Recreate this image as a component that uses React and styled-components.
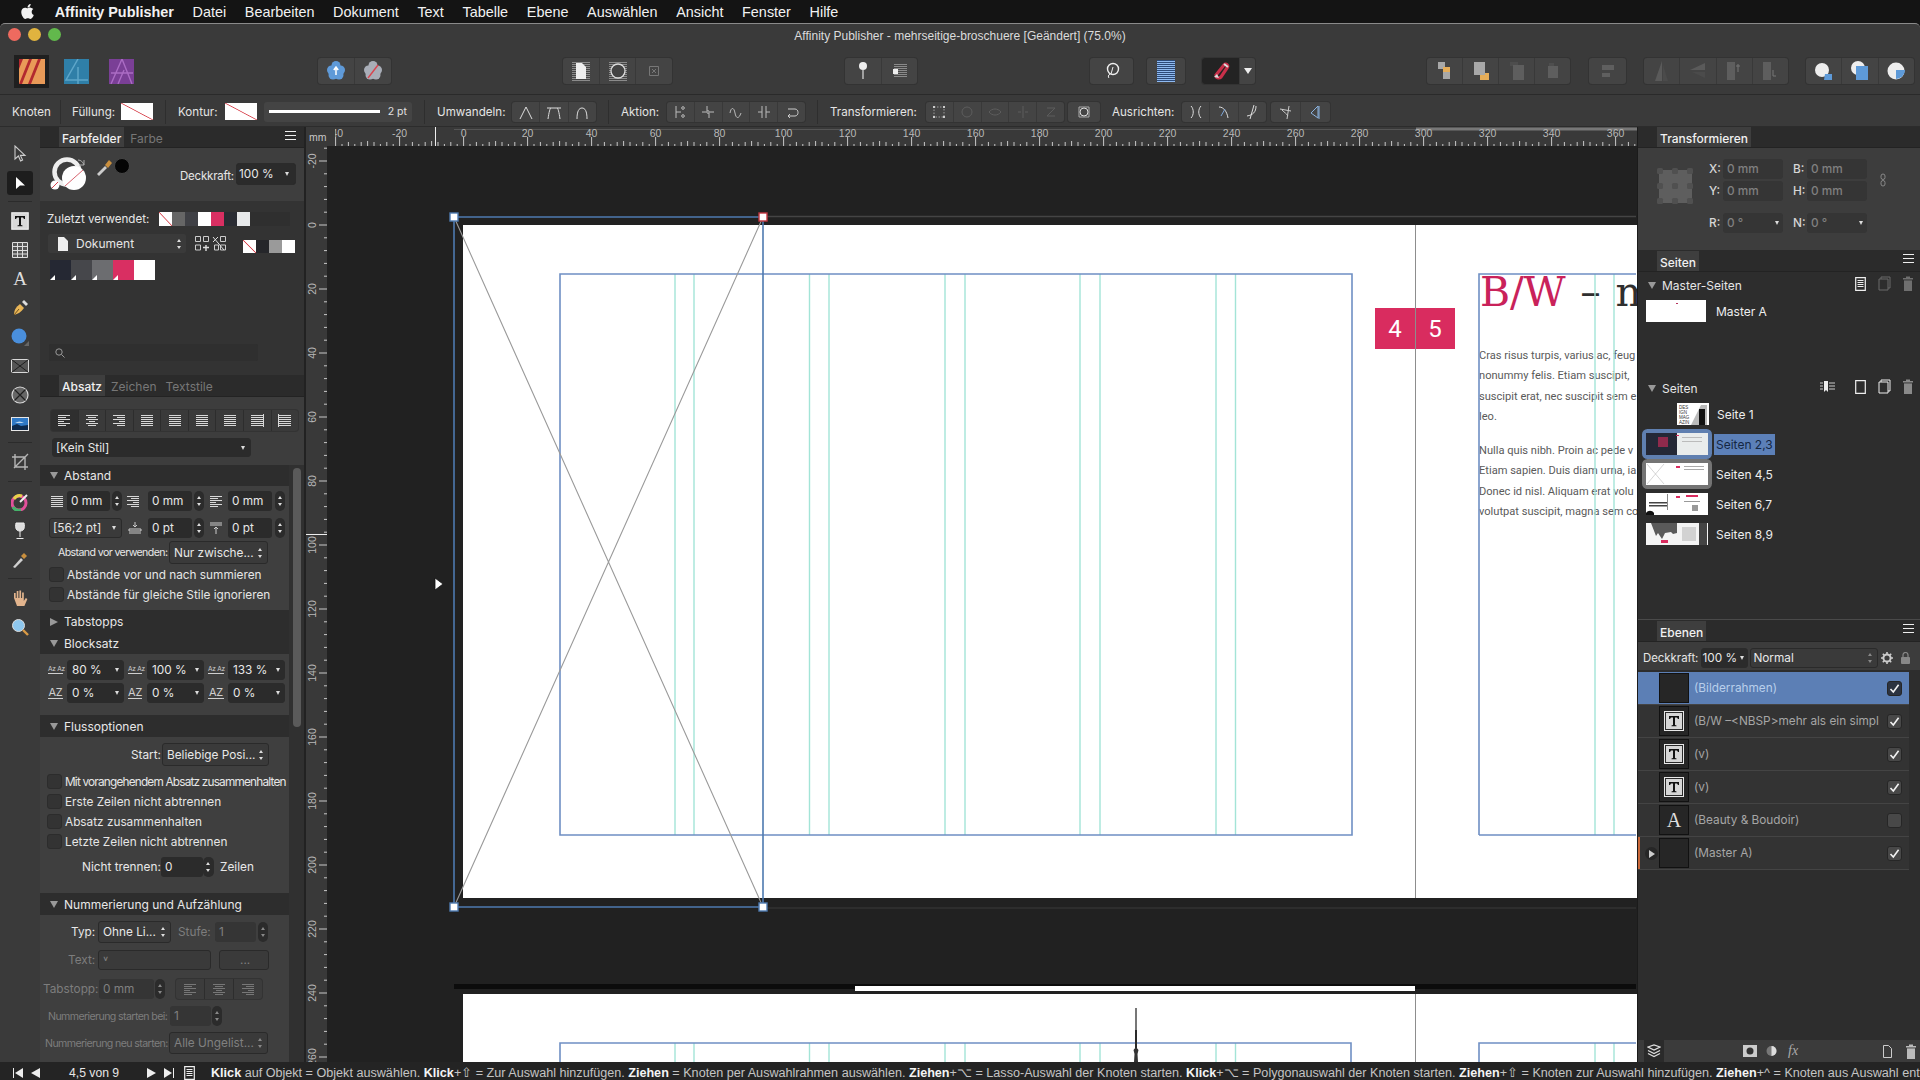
import React from "react";
import styled, { createGlobalStyle, css } from "styled-components";
import { FaApple } from "react-icons/fa";

const GlobalStyle = createGlobalStyle`
  html, body { margin: 0; padding: 0; background: #121212; overflow: hidden; }
  body { font-family: "Inter", "Liberation Sans", sans-serif; color: #e6e6e6; }
  * { box-sizing: border-box; }
`;

const offset = css`
  ${({ $ml }) => $ml !== undefined && `margin-left: ${$ml}px;`}
  ${({ $mt }) => $mt !== undefined && `margin-top: ${$mt}px;`}
`;

const Screen = styled.div`
  width: 1920px;
  height: 1080px;
  display: flex;
  flex-direction: column;
  overflow: hidden;
`;

const MenuBar = styled.div`
  height: 23px;
  background: #141414;
  display: flex;
  align-items: center;
  gap: 18.7px;
  padding-left: 19px;
  font: 14.4px "Liberation Sans", sans-serif;
  color: #f2f2f2;
  b { margin-left: 1px; }
  svg { margin-right: -1px; }
`;

const Window = styled.div`
  flex: 1;
  display: flex;
  flex-direction: column;
  min-height: 0;
  background: #3a3a3a;
  border-top: 1px solid #8a8a8a;
  border-radius: 5px 5px 0 0;
  overflow: hidden;
`;

const TitleBar = styled.div`
  height: 24px;
  position: relative;
  display: flex;
  align-items: center;
  justify-content: center;
  padding-bottom: 1px;
  font: 12px "Liberation Sans", sans-serif;
  color: #dcdcdc;
`;

const Lights = styled.div`
  position: absolute;
  left: 8px;
  top: 4px;
  display: flex;
  gap: 7px;
`;

const Light = styled.i`
  width: 13px;
  height: 13px;
  border-radius: 50%;
  background: ${({ $c }) => $c};
`;

const Toolbar = styled.div`
  height: 47px;
  display: flex;
  align-items: center;
  padding-left: 14px;
  border-bottom: 1px solid #2a2a2a;
`;

const ContextBar = styled.div`
  height: 32px;
  display: flex;
  align-items: center;
  padding: 2px 0 0 12px;
  border-bottom: 1px solid #2c2c2c;
  font-size: 12px;
  white-space: nowrap;
`;

const CtxLabel = styled.span`
  ${offset}
  width: ${({ $w }) => $w}px;
  flex: none;
  color: #e4e4e4;
  font-size: 11.6px;
`;

const VSep = styled.i`
  ${offset}
  width: 1px;
  height: 24px;
  background: #2e2e2e;
  flex: none;
`;

const AppTile = styled.div`
  ${offset}
  width: ${({ $w }) => $w || 25}px;
  height: ${({ $dark }) => ($dark ? 33 : 26)}px;
  display: flex;
  align-items: center;
  justify-content: center;
  background: ${({ $dark }) => ($dark ? "#1f1f1f" : "transparent")};
  flex: none;
`;

const BtnGroup = styled.div`
  ${offset}
  display: flex;
  flex: none;
  height: ${({ $h }) => $h || 26}px;
  width: ${({ $w }) => $w}px;
  border-radius: 3px;
  overflow: hidden;
  background: ${({ $bg }) => $bg || "#444444"};
  box-shadow: 0 0 0 1px #333333;
`;

const TBtn = styled.div`
  flex: ${({ $fixed }) => ($fixed ? `0 0 ${$fixed}px` : "1")};
  min-width: 0;
  display: flex;
  align-items: center;
  justify-content: center;
  background: ${({ $bg }) => $bg || "transparent"};
  & + & { border-left: 1px solid #393939; }
`;

const ColorChip = styled.div`
  ${offset}
  width: ${({ $w }) => $w}px;
  height: ${({ $h }) => $h}px;
  flex: none;
  background: ${({ $c }) =>
    $c === "none"
      ? "linear-gradient(to top right, #fff calc(50% - 0.8px), #d8454f 50%, #fff calc(50% + 0.8px))"
      : $c};
`;

const StrokeBox = styled.div`
  ${offset}
  width: 148px;
  height: 20px;
  flex: none;
  display: flex;
  align-items: center;
  padding: 0 5px;
  background: #444444;
  border-radius: 3px;
  font-size: 10.5px;
  color: #e0e0e0;
  justify-content: space-between;
  i { width: 111px; height: 3px; background: #fff; display: block; }
`;

const Main = styled.div`
  flex: 1;
  min-height: 0;
  display: flex;
`;

const ToolColumn = styled.div`
  width: 40px;
  flex: none;
  display: flex;
  flex-direction: column;
  align-items: center;
  padding-top: 12px;
  background: #3a3a3a;
`;

const ToolBtn = styled.div`
  width: 26px;
  height: ${({ $h }) => $h || 29}px;
  flex: none;
  display: flex;
  align-items: center;
  justify-content: center;
  border-radius: 3px;
  ${({ $on }) => $on && "background: #1d1d1d; height: 24px; margin: 3px 0 2px;"}
`;

const ToolSep = styled.i`
  width: 24px;
  height: 1px;
  background: #2b2b2b;
  margin: ${({ $m }) => $m || 4}px 0;
  flex: none;
`;

const ToolLetter = styled.span`
  font: 19px "Liberation Serif", serif;
  color: #ddd;
`;

const LeftColumn = styled.div`
  width: 266px;
  flex: none;
  display: flex;
  flex-direction: column;
  background: #2e2e2e;
  border-right: 2px solid #222;
  font-size: 11.8px;
`;

const PanelHead = styled.div`
  height: ${({ $h }) => $h || 21}px;
  flex: none;
  display: flex;
  align-items: flex-end;
  position: relative;
  padding-left: ${({ $pl }) => $pl || 19}px;
  gap: 3px;
  background: #2b2b2b;
  border-bottom: 1px solid #232323;
  ${({ $line }) => $line && "border-top: 1px solid #4a4a4a;"}
  font-size: 12px;
`;

const Tab = styled.div`
  height: ${({ $h }) => $h || 20}px;
  padding: 2px 3px 0;
  display: flex;
  align-items: center;
  color: ${({ $on }) => ($on ? "#f1f1f1" : "#777")};
  background: ${({ $on }) => ($on ? "#3e3e3e" : "transparent")};
  ${({ $on }) => $on && "font-weight: 500;"}
`;

const MenuGlyph = styled.div`
  position: absolute;
  right: ${({ $r }) => $r}px;
  top: 4px;
  width: 11px;
  height: 9px;
  border-top: 1px solid #eee;
  border-bottom: 1px solid #eee;
  &::before {
    content: "";
    display: block;
    margin-top: 3px;
    height: 1px;
    background: #eee;
  }
`;

const ColorTop = styled.div`
  height: 53px;
  flex: none;
  display: flex;
  background: #3e3e3e;
  position: relative;
  padding: 9px 0 0 10px;
`;

const OpacityText = styled.span`
  position: absolute;
  left: 140px;
  top: 21px;
  font-size: 11.5px;
  letter-spacing: -0.2px;
`;

const SwatchArea = styled.div`
  height: 174px;
  flex: none;
  background: #333333;
  padding-top: 11px;
`;

const Row = styled.div`
  ${offset}
  display: flex;
  align-items: center;
  height: ${({ $h }) => $h || 20}px;
  padding-left: ${({ $pl }) => $pl || 0}px;
  white-space: nowrap;
  flex: none;
`;

const RecentLabel = styled.span`
  width: 112px;
  flex: none;
  font-size: 11.6px;
`;

const RecentStrip = styled.div`
  ${offset}
  width: ${({ $w }) => $w || 131}px;
  height: ${({ $h }) => $h || 14}px;
  flex: none;
  display: flex;
  background: #2f2f2f;
`;

const DocSelect = styled.div`
  ${offset}
  width: 138px;
  height: 19px;
  flex: none;
  display: flex;
  align-items: center;
  padding-left: 10px;
  gap: 8px;
  background: #3a3a3a;
  border-radius: 2px;
  font-size: 12px;
  position: relative;
`;

const Palette = styled.div`
  display: flex;
  margin: 7px 0 0 10px;
`;

const PaletteChip = styled.div`
  width: 21px;
  height: 20px;
  position: relative;
  background: ${({ $c }) => $c};
  ${({ $corner }) =>
    $corner &&
    `&::after {
      content: "";
      position: absolute;
      left: 0;
      bottom: 0;
      border-style: solid;
      border-width: 0 0 5px 5px;
      border-color: transparent transparent #fff transparent;
    }`}
`;

const SearchBox = styled.div`
  width: 209px;
  height: 17px;
  margin: 64px 0 0 9px;
  padding-left: 6px;
  display: flex;
  align-items: center;
  background: #2f2f2f;
  border-radius: 2px;
`;

const AbsatzTop = styled.div`
  height: 68px;
  flex: none;
  background: #3d3d3d;
  padding: 13px 0 0 11px;
`;

const AlignBtn = styled.div`
  flex: 1;
  display: flex;
  align-items: center;
  justify-content: center;
  background: ${({ $on }) => ($on ? "#2f2f2f" : "transparent")};
  & + & { border-left: 1px solid #2d2d2d; }
`;

const Scroller = styled.div`
  flex: 1;
  min-height: 0;
  display: flex;
  background: #303030;
`;

const ScrollBody = styled.div`
  width: 249px;
  flex: none;
  display: flex;
  flex-direction: column;
`;

const ScrollRail = styled.div`
  flex: 1;
  padding: 3px 3px 0 4px;
  &::before {
    content: "";
    display: block;
    height: 259px;
    width: 8px;
    background: #5a5a5a;
    border-radius: 4px;
  }
`;

const SectionHead = styled.div`
  height: ${({ $h }) => $h || 21}px;
  flex: none;
  display: flex;
  align-items: center;
  gap: 6px;
  padding-left: 10px;
  background: #2d2d2d;
  font-size: 12px;
  color: #e8e8e8;
`;

const Tri = styled.i`
  width: 0;
  height: 0;
  flex: none;
  border-style: solid;
  ${({ $open }) =>
    $open
      ? "border-width: 7px 4px 0 4px; border-color: #999 transparent transparent transparent;"
      : "border-width: 4px 0 4px 8px; border-color: transparent transparent transparent #999;"}
`;

const SectionBody = styled.div`
  height: ${({ $h }) => $h}px;
  flex: none;
  background: #3f3f3f;
  padding-top: ${({ $pt }) => $pt || 0}px;
  ${({ $fill }) => $fill && "flex: 1; height: auto;"}
`;

const control = css`
  ${offset}
  width: ${({ $w }) => $w}px;
  height: ${({ $h }) => $h || 20}px;
  flex: none;
  display: flex;
  align-items: center;
  padding-left: ${({ $pl }) => ($pl === undefined ? 4 : $pl)}px;
  border-radius: 3px;
  position: relative;
  font-size: 11.8px;
  white-space: nowrap;
  color: ${({ $dim }) => ($dim ? "#808080" : "#e8e8e8")};
`;

const Field = styled.div`
  ${control}
  background: ${({ $dim }) => ($dim ? "#353535" : "#2b2b2b")};
`;

const SelectBox = styled.div`
  ${control}
  background: ${({ $dark }) => ($dark ? "#2b2b2b" : "#3a3a3a")};
  border: 1px solid ${({ $dark }) => ($dark ? "#2b2b2b" : "#2a2a2a")};
`;

const Caret = styled.i`
  position: absolute;
  right: ${({ $r }) => $r || 4}px;
  top: 50%;
  margin-top: -2px;
  border-style: solid;
  border-width: 4px 2.5px 0 2.5px;
  border-color: #ddd transparent transparent transparent;
`;

const Updown = styled.i`
  position: absolute;
  right: 4px;
  top: 50%;
  margin-top: -5px;
  height: 10px;
  width: 5px;
  &::before, &::after {
    content: "";
    position: absolute;
    left: 0;
    border-style: solid;
    border-color: transparent;
  }
  &::before { top: 0; border-width: 0 2.5px 3px 2.5px; border-bottom-color: ${({ $dim }) => ($dim ? "#888" : "#ddd")}; }
  &::after { bottom: 0; border-width: 3px 2.5px 0 2.5px; border-top-color: ${({ $dim }) => ($dim ? "#888" : "#ddd")}; }
`;

const StepperBox = styled.div`
  ${offset}
  width: ${({ $w }) => $w || 10}px;
  height: 20px;
  flex: none;
  position: relative;
  border-radius: 5px;
  background: #2b2b2b;
  ${Updown} { right: auto; left: 2.5px; }
`;

const Stepper = ({ $ml, $dim, $w }) => (
  <StepperBox $ml={$ml} $w={$w}>
    <Updown $dim={$dim} />
  </StepperBox>
);

const CheckBox = styled.i`
  ${offset}
  width: 15px;
  height: 15px;
  flex: none;
  display: flex;
  align-items: center;
  justify-content: center;
  border-radius: 3px;
  background: #333;
  border: 1px solid #2c2c2c;
`;

const CheckLabel = styled.span`
  margin-left: 3px;
  letter-spacing: ${({ $tight }) => ($tight ? "-0.8px" : "0")};
  font-size: 11.8px;
`;

const SmallLabel = styled.span`
  ${offset}
  width: ${({ $w }) => $w}px;
  flex: none;
  text-align: ${({ $left }) => ($left ? "left" : "right")};
  font-size: ${({ $fs }) => $fs || 11.8}px;
  letter-spacing: ${({ $ls }) => $ls || 0}px;
  color: ${({ $dim }) => ($dim ? "#7d7d7d" : "#e8e8e8")};
`;

const IconSlot = styled.div`
  ${offset}
  width: ${({ $w }) => $w}px;
  flex: none;
  display: flex;
  justify-content: center;
`;

const AzGlyph = styled.span`
  ${offset}
  width: ${({ $w }) => $w}px;
  flex: none;
  text-align: center;
  font-size: ${({ $big }) => ($big ? 11 : 6.5)}px;
  letter-spacing: -0.2px;
  line-height: 1;
  color: #cfcfcf;
  border-bottom: 1px solid #cfcfcf;
  white-space: nowrap;
`;

const Workspace = styled.div`
  flex: 1;
  min-width: 0;
  display: flex;
  flex-direction: column;
`;

const HRulerWrap = styled.div`
  height: 19px;
  flex: none;
  background: #393939;
`;

const CanvasRow = styled.div`
  flex: 1;
  min-height: 0;
  display: flex;
`;

const VRulerWrap = styled.div`
  width: 21px;
  flex: none;
  background: #393939;
`;

const Canvas = styled.div`
  flex: 1;
  position: relative;
  overflow: hidden;
  background: #212121;
`;

const PageSheet = styled.div`
  position: absolute;
  left: 136px;
  top: ${({ $top }) => $top}px;
  width: 1240px;
  height: 673px;
  background: #fff;
`;

const Badge = styled.div`
  position: absolute;
  left: 912px;
  top: 83px;
  width: 80px;
  height: 41px;
  background: #d92c5f;
  display: flex;
  font: 24px Roboto, sans-serif;
  color: #fff;
  span { flex: 1; display: flex; align-items: center; justify-content: center; }
`;

const Headline = styled.div`
  position: absolute;
  left: 1017px;
  top: 41px;
  white-space: nowrap;
  font: 41px/52px "DejaVu Serif", serif;
  color: #2f2f2f;
  letter-spacing: -0.2px;
  word-spacing: 2px;
  b { font-weight: 400; color: #c9225a; }
`;

const BodyCopy = styled.div`
  position: absolute;
  left: 1016px;
  top: ${({ $top }) => $top}px;
  white-space: nowrap;
  font: 11.1px/20.4px Roboto, sans-serif;
  color: #5a5a5a;
`;

const CanvasArt = styled.svg`
  position: absolute;
  left: 0;
  top: 0;
  pointer-events: none;
`;

const RightColumn = styled.div`
  width: 283px;
  flex: none;
  display: flex;
  flex-direction: column;
  background: #2d2d2d;
  font-size: 12px;
  border-left: 1px solid #1b1b1b;
`;

const TransformBody = styled.div`
  height: 102px;
  flex: none;
  display: flex;
  background: #3d3d3d;
  padding: 11px 0 0 18px;
`;

const AnchorBox = styled.div`
  margin-top: 8px;
  flex: none;
  line-height: 0;
`;

const TransformGrid = styled.div`
  margin-left: 14px;
  display: grid;
  grid-template-columns: 14px 60px 10px 14px 60px;
  grid-template-rows: 20px 20px 8px 20px;
  gap: 2px 0;
  align-items: center;
  font-size: 11.8px;
  font-weight: 500;
  color: #d6d6d6;
`;

const GridSpacer = styled.i`
  grid-column: 1 / -1;
`;

const PagesBody = styled.div`
  height: 347px;
  flex: none;
  padding-top: 3px;
  display: flex;
  flex-direction: column;
`;

const PagesHead = styled.div`
  ${offset}
  height: 20px;
  flex: none;
  display: flex;
  align-items: center;
  gap: 6px;
  padding-left: 10px;
  position: relative;
  font-size: 12px;
`;

const HeadIcons = styled.div`
  position: absolute;
  left: 183px;
  top: 1px;
  display: flex;
  align-items: center;
  width: 92px;
  justify-content: flex-end;
  gap: 12px;
`;

const BookmarkSlot = styled.span`
  margin-right: 8px;
`;

const PageRow = styled.div`
  ${offset}
  height: 22px;
  flex: none;
  display: flex;
  align-items: center;
  padding-left: ${({ $pl }) => $pl || 8}px;
  font-size: 12px;
`;

const ThumbFrame = styled.div`
  flex: none;
  border-radius: 2px;
  line-height: 0;
  box-shadow: ${({ $ring }) => ($ring ? `0 0 0 4px ${$ring}` : "none")};
`;

const PageName = styled.span`
  margin-left: ${({ $hl, $ml }) => $ml || ($hl ? 6 : 8)}px;
  padding: ${({ $hl }) => ($hl ? "3px 2px" : "0")};
  background: ${({ $hl }) => ($hl ? "#5c80b8" : "transparent")};
  color: ${({ $hl }) => ($hl ? "#142743" : "#eeeeee")};
`;

const LayerOptions = styled.div`
  height: 28px;
  flex: none;
  display: flex;
  align-items: center;
  padding: 3px 0 0 5px;
  background: #3c3c3c;
  font-size: 11.4px;
`;

const LayerList = styled.div`
  flex: none;
  padding-top: 2px;
`;

const LayerRow = styled.div`
  width: 271px;
  height: 33px;
  display: flex;
  align-items: center;
  position: relative;
  padding-left: 21px;
  background: ${({ $on }) => ($on ? "#5c7fb5" : "#333333")};
  border-bottom: 1px solid #444;
  ${({ $flag }) => $flag && "box-shadow: inset 2px 0 0 #c9683a;"}
`;

const LayerThumb = styled.div`
  width: 30px;
  height: 30px;
  flex: none;
  display: flex;
  align-items: center;
  justify-content: center;
  background: #262626;
  border: 1px solid #111;
`;

const LayerLetter = styled.span`
  font: 20px "Liberation Serif", serif;
  color: #ddd;
`;

const LayerName = styled.span`
  margin-left: 5px;
  flex: 1;
  font-size: 11.8px;
  overflow: hidden;
  white-space: nowrap;
  padding-right: 26px;
  color: ${({ $on }) => ($on ? "#b9cfeb" : "#a6a6a6")};
`;

const LayerCheck = styled(CheckBox)`
  position: absolute;
  right: 7px;
  top: 9px;
  background: ${({ $on }) => ($on ? "#2c3340" : "#484848")};
  border-color: #262626;
`;

const ExpandDot = styled.div`
  position: absolute;
  left: 7px;
  top: 10px;
  width: 13px;
  height: 13px;
  border-radius: 50%;
  background: #262626;
  display: flex;
  align-items: center;
  justify-content: center;
`;

const LayerFooter = styled.div`
  margin-top: auto;
  height: 22px;
  flex: none;
  display: flex;
  align-items: center;
  padding-left: 6px;
  background: #3b3b3b;
`;

const StackBtn = styled.div`
  width: 20px;
  height: 22px;
  flex: none;
  background: #2a2a2a;
  display: flex;
  align-items: center;
  justify-content: center;
`;

const FxLabel = styled.span`
  margin-left: 11px;
  width: 16px;
  flex: none;
  font: italic 14px "Liberation Serif", serif;
  color: #aaa;
`;

const StatusBar = styled.div`
  height: 18px;
  flex: none;
  display: flex;
  align-items: center;
  padding-top: 3px;
  background: #242424;
  font: 12.62px "Liberation Sans", sans-serif;
  color: #c4c4c4;
  white-space: nowrap;
  overflow: hidden;
  b { color: #f4f4f4; }
`;

const Pager = styled.span`
  width: 52px;
  margin-left: 29px;
  flex: none;
  color: #e6e6e6;
  font-size: 12.2px;
`;

const Hint = styled.span`
  margin-left: 16px;
  flex: none;
`;

const Ic = ({ w = 16, h = 16, children }) => (
  <svg width={w} height={h} viewBox={`0 0 ${w} ${h}`} fill="none" style={{ display: "block", flex: "none" }}>
    {children}
  </svg>
);

const Lines = ({ x = 1, w = 12, y0 = 2, n = 6, step = 2, c = "#ddd" }) =>
  Array.from({ length: n }, (_, i) => <path key={i} d={`M${x} ${y0 + i * step + 0.5}h${w}`} stroke={c} />);

const TriShape = ({ d, c = "#eee" }) => <path d={d} fill={c} />;

// Small icons
const Flower = ({ body, slash }) => (
  <Ic w={20} h={22}>
    <g fill={body}>
      <circle cx="10" cy="5.5" r="4.5" />
      <circle cx="5.5" cy="10" r="4.5" />
      <circle cx="14.5" cy="10" r="4.5" />
      <circle cx="7" cy="15" r="4.5" />
      <circle cx="13" cy="15" r="4.5" />
      <circle cx="10" cy="11" r="5" />
    </g>
    {slash ? (
      <path d="M5 18 15 5" stroke="#d8454f" strokeWidth="1.4" />
    ) : (
      <path d="M10 15V8M7.8 10 10 7l2.2 3" stroke="#fff" strokeWidth="1.5" />
    )}
  </Ic>
);

const toolbarIcons = {
  page: (
    <Ic w={20} h={20}>
      <Lines x={1} w={18} y0={1} n={10} step={2} c="#8b8b8b" />
      <path d="M5 2h6l4 4v12H5z" fill="#eee" />
    </Ic>
  ),
  circleLines: (
    <Ic w={20} h={20}>
      <Lines x={1} w={18} y0={1} n={10} step={2} c="#8b8b8b" />
      <circle cx="10" cy="10" r="7" fill="#444" stroke="#ddd" strokeWidth="1.3" />
    </Ic>
  ),
  boxX: (
    <Ic w={12} h={12}>
      <path d="M1.5 1.5h9v9h-9z" stroke="#777" />
      <path d="M4 4l4 4M8 4 4 8" stroke="#777" />
    </Ic>
  ),
  pin: (
    <Ic w={12} h={20}>
      <circle cx="6" cy="5" r="4" fill="#eee" />
      <path d="M6 8v10" stroke="#ddd" strokeWidth="1.2" />
    </Ic>
  ),
  textBox: (
    <Ic w={18} h={18}>
      <Lines x={4} w={13} y0={2} n={7} step={2} c="#8a8a8a" />
      <path d="M3 7h5v5H3z" fill="#eee" />
    </Ic>
  ),
  lasso: (
    <Ic w={18} h={18}>
      <circle cx="10" cy="7" r="5.5" stroke="#eee" strokeWidth="1.4" />
      <path d="M7 12c-2 1-2 3-1 4M10 5l-2 7" stroke="#eee" />
    </Ic>
  ),
  blueLines: (
    <Ic w={20} h={24}>
      <path d="M1 1h18v22H1z" fill="#2d4a78" />
      <Lines x={1} w={18} y0={2} n={11} step={2} c="#8fbaf0" />
    </Ic>
  ),
  magnet: (
    <Ic w={20} h={22}>
      <path d="M5 15 13 5c2-2 5 0 3 3l-6 9c-1 1-5 2-5-2z" stroke="#c9304a" strokeWidth="3.2" fill="none" />
      <path d="M3 17l3-3 2 4z" fill="#ddd" />
      <path d="M13 4l4 3" stroke="#ddd" strokeWidth="2" />
    </Ic>
  ),
  orange1: (
    <Ic w={16} h={22}>
      <path d="M1 2h7v7H1z" fill="#a8a8a8" />
      <path d="M6 7h7v7H6z" fill="#e6ad58" />
      <path d="M6 12h7v7H6z" fill="#a8a8a8" />
    </Ic>
  ),
  orange2: (
    <Ic w={18} h={22}>
      <path d="M8 13h9v7H8z" fill="#e6ad58" />
      <path d="M2 2h11v13H2z" fill="#a8a8a8" />
    </Ic>
  ),
  grayStack: (
    <Ic w={16} h={20}>
      <path d="M1 1h8v4H1z" fill="#4d4d4d" />
      <path d="M4 4h11v15H4z" fill="#5e5e5e" />
    </Ic>
  ),
  grayStack2: (
    <Ic w={14} h={18}>
      <path d="M3 1h5v3H3z" fill="#4e4e4e" />
      <path d="M2 4h10v12H2z" fill="#5e5e5e" />
    </Ic>
  ),
  grayBars: (
    <Ic w={16} h={14}>
      <path d="M2 1h12v5H2z" fill="#5f5f5f" />
      <path d="M2 9h8v4H2z" fill="#5f5f5f" />
    </Ic>
  ),
  triUp: (
    <Ic w={18} h={22}>
      <path d="M9 1v20H2z" fill="#5a5a5a" />
      <path d="M10 5v16h5z" fill="#4b4b4b" />
    </Ic>
  ),
  triLeft: (
    <Ic w={20} h={20}>
      <path d="M2 9 17 2v7z" fill="#5a5a5a" />
      <path d="M4 11h13v6z" fill="#4b4b4b" />
    </Ic>
  ),
  rotA: (
    <Ic w={18} h={22}>
      <path d="M2 2h8v18H2z" fill="#5e5e5e" />
      <path d="M11 6h4M13 4v8" stroke="#777" />
    </Ic>
  ),
  rotB: (
    <Ic w={18} h={22}>
      <path d="M2 2h8v18H2z" fill="#5e5e5e" />
      <path d="M12 10v6h3" stroke="#777" />
    </Ic>
  ),
  geoA: (
    <Ic w={20} h={20}>
      <circle cx="8" cy="9" r="7" fill="#eeeeee" />
      <path d="M11 13h7v6h-8z" fill="#5e9ad8" />
    </Ic>
  ),
  geoB: (
    <Ic w={20} h={22}>
      <circle cx="8" cy="8" r="7" fill="#eeeeee" />
      <path d="M6 6h12v14H6z" fill="#5e9ad8" />
    </Ic>
  ),
  geoC: (
    <Ic w={20} h={20}>
      <circle cx="10" cy="10" r="8.5" fill="#eeeeee" />
      <path d="M10 9h9a9 9 0 0 1-9 9z" fill="#5e9ad8" />
    </Ic>
  ),
};

const curveIcons = {
  peak: <path d="M2 15 8 3l6 12" stroke="#ddd" />,
  peak2: (
    <>
      <path d="M2 15c1-7 2-11 3-11h6c1 0 2 4 3 11" stroke="#ddd" />
      <path d="M1 4h4M11 4h4" stroke="#ddd" />
    </>
  ),
  round: <path d="M3 15c0-8 2-11 5-11s5 3 5 11" stroke="#ddd" />,
  a1: (
    <>
      <path d="M4 2v12M4 8h5" stroke="#bbb" />
      <circle cx="11" cy="4" r="1.3" stroke="#bbb" />
      <circle cx="11" cy="12" r="1.3" stroke="#bbb" />
    </>
  ),
  a2: (
    <>
      <path d="M2 8h4M10 8h4M7 2v5M9 9v5" stroke="#bbb" />
      <circle cx="8" cy="8" r="1.3" stroke="#bbb" />
    </>
  ),
  a3: <path d="M2 9c1-6 4-6 5 0s4 6 6 0" stroke="#bbb" />,
  a4: <path d="M2 8h4M10 8h4M6 2v12M10 2v12" stroke="#bbb" />,
  a5: <path d="M4 5h7c4 0 4 7 0 7H5M6 10l-2 2 2 2" stroke="#ccc" />,
  t1: (
    <>
      <path d="M3 3h10v10H3z" stroke="#999" strokeDasharray="1.5 1.5" />
      <path d="M2 2h2v2H2zM12 2h2v2h-2zM2 12h2v2H2zM12 12h2v2h-2z" fill="#ccc" />
    </>
  ),
  tOff1: <circle cx="8" cy="8" r="5" stroke="#5d5d5d" />,
  tOff2: <path d="M2 8c3-4 9-4 12 0-3 4-9 4-12 0z" stroke="#5d5d5d" />,
  tOff3: <path d="M8 2v12M3 8h3M10 8h3" stroke="#5d5d5d" />,
  tOff4: <path d="M4 4h8L4 12h8" stroke="#5d5d5d" />,
  t2: (
    <>
      <path d="M3 3h10v10H3z" stroke="#aaa" />
      <circle cx="8" cy="8" r="4" stroke="#ddd" />
    </>
  ),
  s1: <path d="M3 2c3 3 3 9 0 12M13 2c-3 3-3 9 0 12" stroke="#ddd" />,
  s2: (
    <>
      <path d="M3 3c5 0 8 5 9 11" stroke="#ddd" />
      <path d="M5 12l4-7" stroke="#7ea6d8" />
    </>
  ),
  s3: <path d="M12 2c0 6-3 9-9 10M10 1 6 15" stroke="#ddd" />,
  s4: <path d="M2 5l11 2M11 2 9 15M4 6c3 3 4 3 6 6" stroke="#ccc" />,
  s5: <path d="M10 2 3 9l7 5zM11 2v13" stroke="#8bb3df" />,
};

const Cv = ({ k }) => <Ic>{curveIcons[k]}</Ic>;

const rulerMarksH = () => {
  const out = [];
  for (let mm = -48; mm <= 370; mm += 2) {
    const x = 463.6 + mm * 3.2 - 306;
    const major = mm % 20 === 0;
    const mid = mm % 10 === 0;
    const len = major ? 9 : mid ? 5 : mm % 4 === 0 ? 4 : 2;
    out.push(<path key={mm} d={`M${x.toFixed(1)} ${19 - len}V19`} stroke="#d8d8d8" strokeWidth="0.9" />);
    if (major) {
      out.push(
        <text key={`t${mm}`} x={x} y={9.5} fontSize="10.5" fill="#b8b8b8" textAnchor="middle" fontFamily="Liberation Sans">
          {mm}
        </text>,
      );
    }
  }
  return out;
};

const rulerMarksV = () => {
  const out = [];
  for (let mm = -24; mm <= 264; mm += 4) {
    const y = 225 + mm * 3.2 - 146;
    const major = mm % 20 === 0;
    out.push(<path key={mm} d={`M${major ? 13 : 18} ${y.toFixed(1)}H21`} stroke="#d8d8d8" strokeWidth="0.9" />);
    if (major) {
      out.push(
        <text
          key={`t${mm}`}
          x={0}
          y={0}
          fontSize="10.5"
          fill="#b8b8b8"
          textAnchor="middle"
          fontFamily="Liberation Sans"
          transform={`translate(10 ${y}) rotate(-90)`}
        >
          {mm}
        </text>,
      );
    }
  }
  return out;
};

const guideXs = [675, 694, 809.5, 829, 945, 965, 1080, 1100, 1216, 1235.5, 1595, 1614];

const Guides = ({ top, bottom }) => (
  <>
    <path d={`M1415.5 ${top - 49}V${bottom + 63}`} stroke="#8d8d8d" />
    {guideXs.map((x) => (
      <path key={x} d={`M${x} ${top}V${bottom}`} stroke="#a3e4d7" strokeWidth="1.4" />
    ))}
    <path d={`M1479 ${bottom}V${top}H1640M1640 ${bottom}H1479`} stroke="#6f8fc4" strokeWidth="1.6" fill="none" />
    <path d={`M560 ${top}H1352V${bottom}H560Z`} stroke="#6f8fc4" strokeWidth="1.6" fill="none" />
  </>
);

const Node = ({ x, y, red }) => (
  <rect x={x - 4} y={y - 4} width="8" height="8" fill="#fff" stroke={red ? "#c0353f" : "#4e7ab0"} strokeWidth="1.4" />
);

const Thumb = ({ kind }) => {
  if (kind === "one")
    return (
      <svg width="32" height="22" viewBox="0 0 32 22">
        <rect width="32" height="22" fill="#fff" />
        <path d="M14 22 24 2h6v20z" fill="#bbb" />
        <path d="M22 6h6v16h-6z" fill="#111" />
        <text x="2" y="6" fontSize="4.5" fill="#333" fontFamily="Liberation Sans">DES</text>
        <text x="2" y="11" fontSize="4.5" fill="#333" fontFamily="Liberation Sans">IGN</text>
        <text x="2" y="16" fontSize="4.5" fill="#333" fontFamily="Liberation Sans">MAG</text>
        <text x="2" y="21" fontSize="4.5" fill="#333" fontFamily="Liberation Sans">AZIN</text>
      </svg>
    );
  const art = {
    a: (
      <>
        <path d="M0 0h31v22H0z" fill="#242836" />
        <path d="M12 4h10v10H12z" fill="#8f2a4c" />
        <path d="M31 0h31v22H31z" fill="#e9ecec" />
        <path d="M36 4h20v1H36zM36 8h20v1H36z" fill="#bbb" />
        <path d="M30 2h3v1h-3z" fill="#d92c5f" />
      </>
    ),
    b: (
      <>
        <path d="M0 0h62v22H0z" fill="#fff" />
        <path d="M1 1 18 21M18 1 1 21" stroke="#bbb" strokeWidth="0.6" />
        <path d="M30 3h4v2h-4z" fill="#d92c5f" />
        <path d="M38 3h20v1H38zM38 6h20v1H38z" fill="#aaa" />
      </>
    ),
    c: (
      <>
        <path d="M0 0h62v22H0z" fill="#fff" />
        <path d="M3 9h18v1.5H3zM3 12h18v1.5H3z" fill="#444" />
        <path d="M21 1h1v16h-1z" fill="#888" />
        <path d="M0 20c2-3 6-3 8 0v2H0z" fill="#111" />
        <path d="M30 3h4v2h-4zM40 2h12v2H40z" fill="#d92c5f" />
        <path d="M38 8h16v1H38zM46 12h6v6h-6z" fill="#999" />
      </>
    ),
    d: (
      <>
        <path d="M0 0h62v22H0z" fill="#f4f4f4" />
        <path d="M5 0h26v10l-4 1-2-2-6 1-3 6-4-6-2 3z" fill="#5a5a5a" />
        <path d="M53 0h8v22h-8z" fill="#444" />
        <path d="M36 4h14v14H36z" fill="#d2d2d2" />
        <path d="M15 17h7v3h-7z" fill="#d92c5f" />
      </>
    ),
  }[kind];
  return (
    <svg width="62" height="22" viewBox="0 0 62 22">
      {art}
    </svg>
  );
};

const FileGlyph = ({ c = "#eee" }) => (
  <Ic w={10} h={14}>
    <path d="M0 0h6l4 4v10H0z" fill={c} />
  </Ic>
);

const PageIconLined = () => (
  <Ic w={11} h={14}>
    <path d="M.7.7h9.6v12.6H.7z" stroke="#eee" strokeWidth="1.2" />
    <Lines x={2.5} w={6} y0={3} n={4} step={2} c="#eee" />
  </Ic>
);

const PageIconDup = ({ c = "#6b6b6b" }) => (
  <Ic w={13} h={15}>
    <path d="M3 1h9v11H3z" stroke={c} />
    <path d="M1 3h9v11H1z" stroke={c} fill="#2d2d2d" />
  </Ic>
);

const Trash = ({ c = "#6f6f6f" }) => (
  <Ic w={10} h={15}>
    <path d="M0 2h10v1.6H0zM3 .5h4V2H3z" fill={c} />
    <path d="M1 4.4h8V15H1z" fill={c} />
  </Ic>
);

const Check = () => (
  <Ic w={11} h={11}>
    <path d="M1.5 6 4.3 9 9.6 1.8" stroke="#f2f2f2" strokeWidth="1.6" />
  </Ic>
);

const AlignIcon = ({ mode, c = "#d8d8d8" }) => {
  const widths = ["left", "center", "right"].includes(mode) ? [12, 8, 12, 6, 12, 8] : [12, 12, 12, 12, 12, 12];
  return (
    <Ic w={14} h={13}>
      {widths.map((w, i) => {
        const x = mode === "center" ? (14 - w) / 2 : mode === "right" ? 13 - w : 1;
        return <path key={i} d={`M${x} ${i * 2 + 1.5}h${w}`} stroke={c} />;
      })}
      {mode === "barR" && <path d="M13.5 0v13" stroke={c} />}
      {mode === "barL" && <path d="M.5 0v13" stroke={c} />}
    </Ic>
  );
};

const Az = ({ w, big, ml, label = "Az Az" }) => (
  <AzGlyph $w={w} $big={big} $ml={ml}>
    {label}
  </AzGlyph>
);

const Picker = () => (
  <Ic w={16} h={16}>
    <path d="M1 15 9 6l2 2-8 8z" fill="#d0d0d0" />
    <path d="M9 4l3-3 3 3-3 3z" fill="#c98f3e" />
  </Ic>
);

const LayerT = () => (
  <Ic w={20} h={20}>
    <rect x=".5" y=".5" width="19" height="19" fill="#2a2a2a" stroke="#e8e8e8" />
    <rect x="2" y="2" width="16" height="16" fill="#d6d6d6" />
    <path d="M5 5h10v3h-1l-1-1.4h-2V14l1.5.5v.8h-5v-.8L9 14V6.6H7L6 8H5z" fill="#111" />
  </Ic>
);

const Anchor = () => (
  <svg width="39" height="39" viewBox="0 0 39 39">
    <rect x="3" y="3" width="33" height="33" fill="#5e5e5e" />
    {[1, 16, 31].flatMap((y) =>
      [1, 16, 31].map((x) => <rect key={`${x}-${y}`} x={x} y={y} width="6" height="6" rx="1.5" fill="#505050" />),
    )}
  </svg>
);

const layers = [
  { name: "(Bilderrahmen)", on: true, check: true },
  { name: "(B/W –<NBSP>mehr als ein simpl", t: true, check: true },
  { name: "(v)", t: true, check: true },
  { name: "(v)", t: true, check: true },
  { name: "(Beauty & Boudoir)", a: true },
  { name: "(Master A)", check: true, master: true },
];

export default function App() {
  return (
    <Screen>
      <GlobalStyle />
      <MenuBar>
        <FaApple size={17} color="#f2f2f2" />
        <b>Affinity Publisher</b>
        {["Datei", "Bearbeiten", "Dokument", "Text", "Tabelle", "Ebene", "Auswählen", "Ansicht", "Fenster", "Hilfe"].map((m) => (
          <span key={m}>{m}</span>
        ))}
      </MenuBar>
      <Window>
        <TitleBar>
          <Lights>
            <Light $c="#ee6a5f" />
            <Light $c="#e0b33f" />
            <Light $c="#62b84c" />
          </Lights>
          Affinity Publisher - mehrseitige-broschuere [Geändert] (75.0%)
        </TitleBar>
        <Toolbar>
          <AppTile $dark $w={35}>
            <Ic w={26} h={25}>
              <path d="M0 0h26v25H0z" fill="#e99a58" />
              <path d="M0 0h4L0 10zM10 0h3L3 25H0zM19 0h3L12 25H9z" fill="#b2292f" />
            </Ic>
          </AppTile>
          <AppTile $ml={15}>
            <Ic w={25} h={25}>
              <path d="M0 0h25v25H0z" fill="#2f7fa8" />
              <path d="M14 0 2 21h22M14 8v17" stroke="#5ea6c9" strokeWidth="1.5" />
            </Ic>
          </AppTile>
          <AppTile $ml={20}>
            <Ic w={25} h={25}>
              <path d="M0 0h25v25H0z" fill="#7a3f96" />
              <path d="M13 0 2 25M13 0l10 25M2 14h22M9 25l6-14" stroke="#ab6cc4" strokeWidth="1.4" />
            </Ic>
          </AppTile>
          <BtnGroup $ml={184} $w={73}>
            <TBtn><Flower body="#5f9ad8" /></TBtn>
            <TBtn><Flower body="#a9aeb8" slash /></TBtn>
          </BtnGroup>
          <BtnGroup $ml={172} $w={109}>
            <TBtn>{toolbarIcons.page}</TBtn>
            <TBtn>{toolbarIcons.circleLines}</TBtn>
            <TBtn>{toolbarIcons.boxX}</TBtn>
          </BtnGroup>
          <BtnGroup $ml={173} $w={72}>
            <TBtn>{toolbarIcons.pin}</TBtn>
            <TBtn>{toolbarIcons.textBox}</TBtn>
          </BtnGroup>
          <BtnGroup $ml={173} $w={43}>
            <TBtn>{toolbarIcons.lasso}</TBtn>
          </BtnGroup>
          <BtnGroup $ml={14} $w={38}>
            <TBtn>{toolbarIcons.blueLines}</TBtn>
          </BtnGroup>
          <BtnGroup $ml={17} $w={53}>
            <TBtn $bg="#232323" $fixed={37}>{toolbarIcons.magnet}</TBtn>
            <TBtn>
              <Ic w={8} h={8}>
                <TriShape d="M0 1h8L4 7z" />
              </Ic>
            </TBtn>
          </BtnGroup>
          <BtnGroup $ml={172} $w={143}>
            <TBtn>{toolbarIcons.orange1}</TBtn>
            <TBtn>{toolbarIcons.orange2}</TBtn>
            <TBtn>{toolbarIcons.grayStack}</TBtn>
            <TBtn>{toolbarIcons.grayStack2}</TBtn>
          </BtnGroup>
          <BtnGroup $ml={19} $w={37}>
            <TBtn>{toolbarIcons.grayBars}</TBtn>
          </BtnGroup>
          <BtnGroup $ml={18} $w={144}>
            <TBtn>{toolbarIcons.triUp}</TBtn>
            <TBtn>{toolbarIcons.triLeft}</TBtn>
            <TBtn>{toolbarIcons.rotA}</TBtn>
            <TBtn>{toolbarIcons.rotB}</TBtn>
          </BtnGroup>
          <BtnGroup $ml={18} $w={108}>
            <TBtn>{toolbarIcons.geoA}</TBtn>
            <TBtn>{toolbarIcons.geoB}</TBtn>
            <TBtn>{toolbarIcons.geoC}</TBtn>
          </BtnGroup>
        </Toolbar>
        <ContextBar>
          <CtxLabel $w={40}>Knoten</CtxLabel>
          <VSep $ml={8} />
          <CtxLabel $ml={11} $w={44}>Füllung:</CtxLabel>
          <ColorChip $ml={5} $w={32} $h={17} $c="none" />
          <VSep $ml={12} />
          <CtxLabel $ml={12} $w={41}>Kontur:</CtxLabel>
          <ColorChip $ml={6} $w={32} $h={17} $c="none" />
          <StrokeBox $ml={7}>
            <i />
            2 pt
          </StrokeBox>
          <VSep $ml={12} />
          <CtxLabel $ml={12} $w={68}>Umwandeln:</CtxLabel>
          <BtnGroup $ml={7} $w={84} $h={20}>
            {["peak", "peak2", "round"].map((k) => (
              <TBtn key={k}><Cv k={k} /></TBtn>
            ))}
          </BtnGroup>
          <VSep $ml={12} />
          <CtxLabel $ml={12} $w={40}>Aktion:</CtxLabel>
          <BtnGroup $ml={6} $w={138} $h={20}>
            {["a1", "a2", "a3", "a4", "a5"].map((k) => (
              <TBtn key={k}><Cv k={k} /></TBtn>
            ))}
          </BtnGroup>
          <VSep $ml={12} />
          <CtxLabel $ml={12} $w={90}>Transformieren:</CtxLabel>
          <BtnGroup $ml={6} $w={138} $h={20}>
            {["t1", "tOff1", "tOff2", "tOff3", "tOff4"].map((k) => (
              <TBtn key={k}><Cv k={k} /></TBtn>
            ))}
          </BtnGroup>
          <BtnGroup $ml={4} $w={32} $h={20}>
            <TBtn><Cv k="t2" /></TBtn>
          </BtnGroup>
          <CtxLabel $ml={12} $w={64}>Ausrichten:</CtxLabel>
          <BtnGroup $ml={6} $w={84} $h={20}>
            {["s1", "s2", "s3"].map((k) => (
              <TBtn key={k}><Cv k={k} /></TBtn>
            ))}
          </BtnGroup>
          <BtnGroup $ml={5} $w={59} $h={20}>
            {["s4", "s5"].map((k) => (
              <TBtn key={k}><Cv k={k} /></TBtn>
            ))}
          </BtnGroup>
        </ContextBar>
        <Main>
          <ToolColumn>
            <ToolBtn>
              <Ic w={16} h={18}>
                <path d="M3 1v13l3.4-3 2.2 5 2-1-2.2-4.6H13z" stroke="#ccc" strokeWidth="1.1" />
              </Ic>
            </ToolBtn>
            <ToolBtn $on>
              <Ic w={12} h={14}>
                <path d="M2 1v12l4-3.5h5z" fill="#fff" />
              </Ic>
            </ToolBtn>
            <ToolSep />
            <ToolBtn>
              <Ic w={18} h={18}>
                <rect x=".8" y=".8" width="16.4" height="16.4" fill="#d8d8d8" stroke="#eee" strokeWidth="1.2" />
                <path d="M4 4h10v3h-1l-1-1.4H10V13l1.5.5v.8h-5v-.8L8 13V5.6H6L5 7H4z" fill="#111" />
              </Ic>
            </ToolBtn>
            <ToolBtn>
              <Ic w={16} h={16}>
                <path d="M.5.5h15v15H.5z" fill="#555" stroke="#ddd" />
                <path d="M.5 4.5h15M.5 8.5h15M.5 12h15M5.5.5v15M10.5.5v15" stroke="#ddd" />
              </Ic>
            </ToolBtn>
            <ToolBtn>
              <ToolLetter>A</ToolLetter>
            </ToolBtn>
            <ToolBtn>
              <Ic w={18} h={18}>
                <path d="M3 16c0-5 2-8 6-11l4 4c-3 4-6 6-10 7z" fill="#e8b557" />
                <path d="M11 3l4 4 2-2-4-4z" fill="#ddd" />
                <path d="M3 16l5-6" stroke="#6e4f1a" />
              </Ic>
            </ToolBtn>
            <ToolBtn>
              <Ic w={20} h={20}>
                <circle cx="9" cy="9" r="7.5" fill="#4a8fdc" />
                <path d="M19 14v5h-5z" fill="#666" />
              </Ic>
            </ToolBtn>
            <ToolBtn>
              <Ic w={18} h={14}>
                <path d="M.5.5h17v13H.5z" fill="#555" stroke="#d8d8d8" />
                <path d="M.5.5l17 13M17.5.5.5 13.5" stroke="#1e1e1e" />
              </Ic>
            </ToolBtn>
            <ToolBtn>
              <Ic w={18} h={18}>
                <circle cx="9" cy="9" r="8" fill="#666" stroke="#d8d8d8" strokeWidth="1.2" />
                <path d="M3.5 3.5l11 11M14.5 3.5l-11 11" stroke="#1e1e1e" strokeWidth="1.2" />
              </Ic>
            </ToolBtn>
            <ToolBtn>
              <Ic w={18} h={14}>
                <path d="M0 0h18v14H0z" fill="#e8e8e8" />
                <path d="M1 1h16v12H1z" fill="#2f79c6" />
                <path d="M1 13V9l5-2 4 2 7-1v5z" fill="#0d2a4d" />
                <path d="M4 6c3-2 6-2 9 0z" fill="#bcd8f0" />
              </Ic>
            </ToolBtn>
            <ToolSep />
            <ToolBtn>
              <Ic w={18} h={18}>
                <path d="M4 1v13h13M1 4h13v13M3 15 17 1" stroke="#b5b5b5" strokeWidth="1.4" />
              </Ic>
            </ToolBtn>
            <ToolSep $m={5} />
            <ToolBtn>
              <Ic w={18} h={18}>
                <circle cx="8" cy="10" r="7" fill="none" stroke="#e1509a" strokeWidth="3" />
                <path d="M3 6a7 7 0 0 1 8-3" stroke="#e7d24a" strokeWidth="3" />
                <path d="M2 14a7 7 0 0 0 8 3" stroke="#44b36a" strokeWidth="3" />
                <path d="M9 9l7-7" stroke="#eee" strokeWidth="2" />
              </Ic>
            </ToolBtn>
            <ToolBtn>
              <Ic w={12} h={18}>
                <path d="M2 1h8c1 5 0 8-4 8s-5-3-4-8zM6 9v6M2.5 16.5h7" stroke="#eee" fill="#ddd" />
              </Ic>
            </ToolBtn>
            <ToolBtn>
              <Picker />
            </ToolBtn>
            <ToolSep />
            <ToolBtn>
              <Ic w={20} h={20}>
                <path d="M4 10V5h1.7v5h1V3h1.7v7h1V2.5h1.7V10h1V4.5h1.7V13l2-3 1.6 1-3 7H7z" fill="#e2b48d" />
              </Ic>
            </ToolBtn>
            <ToolBtn>
              <Ic w={18} h={18}>
                <circle cx="7.5" cy="7.5" r="6" fill="#8ec7ee" stroke="#ddd" />
                <path d="M12 12l5 5" stroke="#d99a45" strokeWidth="2.4" />
              </Ic>
            </ToolBtn>
          </ToolColumn>

          <LeftColumn>
            <PanelHead>
              <Tab $on>Farbfelder</Tab>
              <Tab>Farbe</Tab>
              <MenuGlyph $r={8} />
            </PanelHead>
            <ColorTop>
              <Ic w={84} h={36}>
                <circle cx="17" cy="15" r="12.5" stroke="#eee" strokeWidth="4.5" />
                <circle cx="24" cy="21" r="12" fill="#fff" />
                <path d="M15 29 33 13" stroke="#d8646f" strokeWidth="1" />
                <circle cx="5" cy="28" r="4.5" fill="#fff" />
                <path d="M2 31l6-6" stroke="#d8454f" />
                <path d="M28 3c3 0 5 2 6 5M34 3v5h-5" stroke="#aaa" />
                <path d="M47 17l8-8 2 2-8 8z" fill="#ccc" />
                <path d="M55 8l4-5 3 3-4 5z" fill="#c98f3e" />
                <circle cx="72" cy="9" r="7.5" fill="#050505" stroke="#444" />
              </Ic>
              <OpacityText>Deckkraft:</OpacityText>
              <SelectBox $dark $w={60} $h={22} $ml={102} $mt={6} $pl={2}>
                100 %
                <Caret $r={6} />
              </SelectBox>
            </ColorTop>
            <SwatchArea>
              <Row $h={14} $pl={7}>
                <RecentLabel>Zuletzt verwendet:</RecentLabel>
                <RecentStrip>
                  {["none", "#666", "#3f4045", "#fff", "#d92f62", "#2a2c33", "#e7e9ea"].map((c, i) => (
                    <ColorChip key={i} $w={13} $h={14} $c={c} />
                  ))}
                </RecentStrip>
              </Row>
              <Row $mt={8} $pl={8} $h={19}>
                <DocSelect>
                  <FileGlyph />
                  Dokument
                  <Updown />
                </DocSelect>
                <IconSlot $ml={9} $w={32}>
                  <Ic w={32} h={15}>
                    <path d="M.5.5h5v5h-5zM8.5.5h5v5h-5zM.5 9h5v5h-5z" stroke="#ccc" />
                    <path d="M8 11.5h6M11 9v6" stroke="#ddd" strokeWidth="1.4" />
                    <path d="M25.5.5h5v5h-5zM25.5 9h5v5h-5zM19.5 9h4v5h-4z" stroke="#ccc" />
                    <path d="M18 1l11 13M23 1 18 6" stroke="#ddd" />
                  </Ic>
                </IconSlot>
                <RecentStrip $w={52} $h={13} $ml={16} $mt={5}>
                  {["none", "#25262a", "#9a9a9a", "#fff"].map((c, i) => (
                    <ColorChip key={i} $w={13} $h={13} $c={c} />
                  ))}
                </RecentStrip>
              </Row>
              <Palette>
                {["#252833", "#46474b", "#6c6d70", "#d92f62"].map((c) => (
                  <PaletteChip key={c} $c={c} $corner />
                ))}
                <PaletteChip $c="#fff" />
              </Palette>
              <SearchBox>
                <Ic w={10} h={10}>
                  <circle cx="4" cy="4" r="3.2" stroke="#999" />
                  <path d="M6.5 6.5 9.5 9.5" stroke="#999" />
                </Ic>
              </SearchBox>
            </SwatchArea>
            <PanelHead $h={22}>
              <Tab $on $h={21}>Absatz</Tab>
              <Tab $h={21}>Zeichen</Tab>
              <Tab $h={21}>Textstile</Tab>
            </PanelHead>
            <AbsatzTop>
              <BtnGroup $w={247} $h={21} $bg="#3a3a3a">
                <AlignBtn $on><AlignIcon mode="left" /></AlignBtn>
                <AlignBtn><AlignIcon mode="center" /></AlignBtn>
                <AlignBtn><AlignIcon mode="right" /></AlignBtn>
                <AlignBtn><AlignIcon mode="full" /></AlignBtn>
                <AlignBtn><AlignIcon mode="full" /></AlignBtn>
                <AlignBtn><AlignIcon mode="full" /></AlignBtn>
                <AlignBtn><AlignIcon mode="full" /></AlignBtn>
                <AlignBtn><AlignIcon mode="barR" /></AlignBtn>
                <AlignBtn><AlignIcon mode="barL" /></AlignBtn>
              </BtnGroup>
              <SelectBox $dark $w={199} $h={19} $ml={1} $mt={7} $pl={3}>
                [Kein Stil]
                <Caret $r={5} />
              </SelectBox>
            </AbsatzTop>
            <Scroller>
              <ScrollBody>
                <SectionHead><Tri $open />Abstand</SectionHead>
                <SectionBody $h={124} $pt={5}>
                  <Row $pl={10}>
                    <IconSlot $w={14}><AlignIcon mode="full" /></IconSlot>
                    <Field $ml={3} $w={43}>0 mm</Field>
                    <Stepper $ml={2} />
                    <IconSlot $ml={4} $w={13}><AlignIcon mode="right" /></IconSlot>
                    <Field $ml={9} $w={44}>0 mm</Field>
                    <Stepper $ml={2} />
                    <IconSlot $ml={6} $w={12}><AlignIcon mode="left" /></IconSlot>
                    <Field $ml={6} $w={44}>0 mm</Field>
                    <Stepper $ml={3} />
                  </Row>
                  <Row $pl={9} $mt={7}>
                    <SelectBox $w={73} $pl={3}>
                      [56;2 pt]
                      <Caret $r={5} />
                    </SelectBox>
                    <IconSlot $ml={6} $w={14}>
                      <Ic w={14} h={14}>
                        <path d="M7 1v5M5 4l2 2 2-2" stroke="#ccc" />
                        <path d="M1 8h12v2H1zM1 12h12" stroke="#ccc" />
                      </Ic>
                    </IconSlot>
                    <Field $ml={6} $w={44}>0 pt</Field>
                    <Stepper $ml={2} />
                    <IconSlot $ml={6} $w={12}>
                      <Ic w={14} h={14}>
                        <path d="M1 2h12M1 4h12M7 6v7M5 8l2-2 2 2" stroke="#ccc" />
                      </Ic>
                    </IconSlot>
                    <Field $ml={6} $w={44}>0 pt</Field>
                    <Stepper $ml={3} />
                  </Row>
                  <Row $pl={18} $mt={3} $h={23}>
                    <SmallLabel $w={105} $fs={10.6} $ls={-0.6} $left>Abstand vor verwenden:</SmallLabel>
                    <SelectBox $ml={6} $w={99} $h={23}>
                      Nur zwische...
                      <Updown />
                    </SelectBox>
                  </Row>
                  <Row $pl={9} $mt={3} $h={15}>
                    <CheckBox />
                    <CheckLabel>Abstände vor und nach summieren</CheckLabel>
                  </Row>
                  <Row $pl={9} $mt={5} $h={15}>
                    <CheckBox />
                    <CheckLabel>Abstände für gleiche Stile ignorieren</CheckLabel>
                  </Row>
                </SectionBody>
                <SectionHead $h={23}><Tri />Tabstopps</SectionHead>
                <SectionHead><Tri $open />Blocksatz</SectionHead>
                <SectionBody $h={61} $pt={6}>
                  <Row $pl={8}>
                    <Az w={15} />
                    <SelectBox $dark $ml={4} $w={57}>80 %<Caret /></SelectBox>
                    <Az ml={4} w={14} />
                    <SelectBox $dark $ml={5} $w={57}>100 %<Caret /></SelectBox>
                    <Az ml={4} w={16} />
                    <SelectBox $dark $ml={4} $w={57}>133 %<Caret /></SelectBox>
                  </Row>
                  <Row $pl={8} $mt={3}>
                    <Az big w={15} label="AZ" />
                    <SelectBox $dark $ml={4} $w={57}>0 %<Caret /></SelectBox>
                    <Az big ml={4} w={14} label="AZ" />
                    <SelectBox $dark $ml={5} $w={57}>0 %<Caret /></SelectBox>
                    <Az big ml={4} w={16} label="AZ" />
                    <SelectBox $dark $ml={4} $w={57}>0 %<Caret /></SelectBox>
                  </Row>
                </SectionBody>
                <SectionHead $h={22}><Tri $open />Flussoptionen</SectionHead>
                <SectionBody $h={156} $pt={6}>
                  <Row $pl={91} $h={23}>
                    <SmallLabel $w={29}>Start:</SmallLabel>
                    <SelectBox $ml={2} $w={107} $h={23}>
                      Beliebige Posi...
                      <Updown />
                    </SelectBox>
                  </Row>
                  <Row $pl={7} $mt={8} $h={15}>
                    <CheckBox />
                    <CheckLabel $tight>Mit vorangehendem Absatz zusammenhalten</CheckLabel>
                  </Row>
                  <Row $pl={7} $mt={5} $h={15}>
                    <CheckBox />
                    <CheckLabel>Erste Zeilen nicht abtrennen</CheckLabel>
                  </Row>
                  <Row $pl={7} $mt={5} $h={15}>
                    <CheckBox />
                    <CheckLabel>Absatz zusammenhalten</CheckLabel>
                  </Row>
                  <Row $pl={7} $mt={5} $h={15}>
                    <CheckBox />
                    <CheckLabel>Letzte Zeilen nicht abtrennen</CheckLabel>
                  </Row>
                  <Row $pl={42} $mt={8}>
                    <SmallLabel $w={75} $left>Nicht trennen:</SmallLabel>
                    <Field $ml={4} $w={42}>0</Field>
                    <Stepper $w={11} />
                    <SmallLabel $ml={6} $w={36} $left>Zeilen</SmallLabel>
                  </Row>
                </SectionBody>
                <SectionHead $h={22}><Tri $open />Nummerierung und Aufzählung</SectionHead>
                <SectionBody $fill $pt={6}>
                  <Row $pl={31} $h={22}>
                    <SmallLabel $w={23}>Typ:</SmallLabel>
                    <SelectBox $ml={4} $w={73} $h={22}>
                      Ohne Li...
                      <Updown />
                    </SelectBox>
                    <SmallLabel $dim $ml={7} $w={32}>Stufe:</SmallLabel>
                    <Field $dim $ml={5} $w={41}>1</Field>
                    <Stepper $ml={2} $dim />
                  </Row>
                  <Row $pl={28} $mt={7}>
                    <SmallLabel $dim $w={26}>Text:</SmallLabel>
                    <SelectBox $dim $ml={4} $w={113}>˅</SelectBox>
                    <SelectBox $dim $ml={8} $w={50} $pl={20}>...</SelectBox>
                  </Row>
                  <Row $pl={3} $mt={9}>
                    <SmallLabel $dim $w={52}>Tabstopp:</SmallLabel>
                    <Field $dim $ml={4} $w={55}>0 mm</Field>
                    <Stepper $ml={1} $dim />
                    <BtnGroup $ml={11} $w={86} $h={20} $bg="#3c3c3c">
                      <AlignBtn><AlignIcon mode="left" c="#777" /></AlignBtn>
                      <AlignBtn><AlignIcon mode="center" c="#777" /></AlignBtn>
                      <AlignBtn><AlignIcon mode="right" c="#777" /></AlignBtn>
                    </BtnGroup>
                  </Row>
                  <Row $pl={8} $mt={7}>
                    <SmallLabel $dim $w={116} $fs={10.6} $ls={-0.6} $left>Nummerierung starten bei:</SmallLabel>
                    <Field $dim $ml={6} $w={41}>1</Field>
                    <Stepper $ml={1} $dim />
                  </Row>
                  <Row $pl={5} $mt={6} $h={22}>
                    <SmallLabel $dim $w={119} $fs={10.6} $ls={-0.6} $left>Nummerierung neu starten:</SmallLabel>
                    <SelectBox $dim $ml={5} $w={99} $h={22}>
                      Alle Ungelist...
                      <Updown $dim />
                    </SelectBox>
                  </Row>
                </SectionBody>
              </ScrollBody>
              <ScrollRail />
            </Scroller>
          </LeftColumn>

          <Workspace>
            <HRulerWrap>
              <svg width="1331" height="19" viewBox="0 0 1331 19" style={{ display: "block" }}>
                <path d="M148 2.5h962" stroke="#555" strokeWidth="1" />
                <path d="M1110 2h221" stroke="#777" strokeWidth="3" />
                {rulerMarksH()}
                <rect x="0" y="0" width="29" height="19" fill="#393939" />
                <text x="3" y="14" fontSize="10.5" fill="#c8c8c8" fontFamily="Liberation Sans">mm</text>
                <path d="M129.5 0v19" stroke="#eee" />
              </svg>
            </HRulerWrap>
            <CanvasRow>
              <VRulerWrap>
                <svg width="21" height="916" viewBox="0 0 21 916" style={{ display: "block" }}>
                  {rulerMarksV()}
                  <path d="M0 388.5h21" stroke="#eee" />
                </svg>
              </VRulerWrap>
              <Canvas>
                <PageSheet $top={79}>
                  <Badge>
                    <span>4</span>
                    <span>5</span>
                  </Badge>
                  <Headline>
                    <b>B/W</b> – m
                  </Headline>
                  <BodyCopy $top={121}>
                    Cras risus turpis, varius ac, feug
                    <br />
                    nonummy felis. Etiam suscipit,
                    <br />
                    suscipit erat, nec suscipit sem e
                    <br />
                    leo.
                  </BodyCopy>
                  <BodyCopy $top={216}>
                    Nulla quis nibh. Proin ac pede v
                    <br />
                    Etiam sapien. Duis diam urna, ia
                    <br />
                    Donec id nisl. Aliquam erat volu
                    <br />
                    volutpat suscipit, magna sem co
                  </BodyCopy>
                </PageSheet>
                <PageSheet $top={848} />
                <CanvasArt width="1309" height="916" viewBox="327 146 1309 916">
                  <path d="M763 216.5H1640" stroke="#444" strokeWidth="1.5" />
                  <path d="M763 908H1640" stroke="#3a3a3a" strokeWidth="1" />
                  <Guides top={274} bottom={835} />
                  <path d="M1415.5 994V1062" stroke="#8d8d8d" />
                  <path d="M454 986.5H1640" stroke="#0c0c0c" strokeWidth="5" />
                  <path d="M855 988.5H1415" stroke="#fff" strokeWidth="5" />
                  {guideXs.map((x) => (
                    <path key={x} d={`M${x} 1043V1062`} stroke="#a3e4d7" strokeWidth="1.4" />
                  ))}
                  <path d="M560 1062V1043H1351V1062M1479 1062V1043H1640" stroke="#6f8fc4" strokeWidth="1.6" fill="none" />
                  <path d="M1136 1008v32" stroke="#555" strokeWidth="1.6" />
                  <path d="M1134 1062l.5-8-1-4 2.5-3 2.5 3-1 4 .5 8z" fill="#333" />
                  <path d="M1136 1030v18" stroke="#2a2a2a" strokeWidth="2" />
                  <path d="M454 217 763 907M763 217 454 907" stroke="#9a9a9a" strokeWidth="1.1" />
                  <path d="M454 217H763V907H454Z" stroke="#4e7ab0" strokeWidth="1.6" fill="none" />
                  <Node x={454} y={217} />
                  <Node x={763} y={217} red />
                  <Node x={454} y={907} />
                  <Node x={763} y={907} />
                  <path d="M435 578v12l8-6z" fill="#fff" stroke="#111" strokeWidth="0.8" />
                </CanvasArt>
              </Canvas>
            </CanvasRow>
          </Workspace>

          <RightColumn>
            <PanelHead $pl={19}>
              <Tab $on>Transformieren</Tab>
            </PanelHead>
            <TransformBody>
              <AnchorBox><Anchor /></AnchorBox>
              <TransformGrid>
                <span>X:</span>
                <Field $dim $w={60}>0 mm</Field>
                <i />
                <span>B:</span>
                <Field $dim $w={60}>0 mm</Field>
                <span>Y:</span>
                <Field $dim $w={60}>0 mm</Field>
                <i />
                <span>H:</span>
                <Field $dim $w={60}>0 mm</Field>
                <GridSpacer />
                <span>R:</span>
                <Field $dim $w={60}>0 °<Caret /></Field>
                <i />
                <span>N:</span>
                <Field $dim $w={60}>0 °<Caret /></Field>
              </TransformGrid>
              <IconSlot $ml={13} $w={6} $mt={14}>
                <Ic w={6} h={14}>
                  <rect x="1" y="1" width="4" height="5.5" rx="2" stroke="#888" />
                  <rect x="1" y="7.5" width="4" height="5.5" rx="2" stroke="#888" />
                </Ic>
              </IconSlot>
            </TransformBody>
            <PanelHead $h={22} $pl={19}>
              <Tab $on>Seiten</Tab>
              <MenuGlyph $r={6} />
            </PanelHead>
            <PagesBody>
              <PagesHead>
                <Tri $open />
                Master-Seiten
                <HeadIcons>
                  <PageIconLined />
                  <PageIconDup />
                  <Trash />
                </HeadIcons>
              </PagesHead>
              <PageRow $mt={5}>
                <ThumbFrame>
                  <svg width="60" height="22" viewBox="0 0 60 22">
                    <rect width="60" height="22" fill="#fff" />
                    <rect x="30" y="3" width="2" height="1" fill="#b5335d" />
                  </svg>
                </ThumbFrame>
                <PageName $ml={10}>Master A</PageName>
              </PageRow>
              <PagesHead $mt={56}>
                <Tri $open />
                Seiten
                <HeadIcons>
                  <BookmarkSlot>
                    <Ic w={15} h={12}>
                      <path d="M4 0h4v11l-2-2-2 2z" fill="#eee" />
                      <path d="M0 2h3M0 5h3M0 8h3M9 2h6M9 5h6M9 8h6" stroke="#ccc" />
                    </Ic>
                  </BookmarkSlot>
                  <Ic w={11} h={14}>
                    <path d="M.7.7h9.6v12.6H.7z" stroke="#eee" strokeWidth="1.2" />
                  </Ic>
                  <PageIconDup c="#eeeeee" />
                  <Trash c="#8a8a8a" />
                </HeadIcons>
              </PagesHead>
              <PageRow $mt={5} $pl={39}>
                <ThumbFrame><Thumb kind="one" /></ThumbFrame>
                <PageName>Seite 1</PageName>
              </PageRow>
              <PageRow $mt={8}>
                <ThumbFrame $ring="#5f7fb0"><Thumb kind="a" /></ThumbFrame>
                <PageName $hl>Seiten 2,3</PageName>
              </PageRow>
              <PageRow $mt={8}>
                <ThumbFrame $ring="#747474"><Thumb kind="b" /></ThumbFrame>
                <PageName>Seiten 4,5</PageName>
              </PageRow>
              <PageRow $mt={8}>
                <ThumbFrame><Thumb kind="c" /></ThumbFrame>
                <PageName>Seiten 6,7</PageName>
              </PageRow>
              <PageRow $mt={8}>
                <ThumbFrame><Thumb kind="d" /></ThumbFrame>
                <PageName>Seiten 8,9</PageName>
              </PageRow>
            </PagesBody>
            <PanelHead $h={23} $pl={19} $line>
              <Tab $on>Ebenen</Tab>
              <MenuGlyph $r={6} />
            </PanelHead>
            <LayerOptions>
              <span>Deckkraft:</span>
              <SelectBox $dark $ml={3} $w={47} $h={20} $pl={0}>
                100 %
                <Caret $r={3} />
              </SelectBox>
              <SelectBox $ml={2} $w={128} $h={20} $pl={2}>
                Normal
                <Updown $dim />
              </SelectBox>
              <IconSlot $ml={3} $w={12}>
                <Ic w={12} h={12}>
                  <circle cx="6" cy="6" r="3.6" stroke="#ccc" strokeWidth="2" />
                  <path d="M6 0v2M6 10v2M0 6h2M10 6h2M1.8 1.8l1.4 1.4M8.8 8.8l1.4 1.4M1.8 10.2l1.4-1.4M8.8 3.2l1.4-1.4" stroke="#ccc" strokeWidth="1.6" />
                </Ic>
              </IconSlot>
              <IconSlot $ml={8} $w={9}>
                <Ic w={9} h={12}>
                  <path d="M2 5V3a2.5 2.5 0 0 1 5 0v2" stroke="#888" strokeWidth="1.2" />
                  <rect y="5" width="9" height="7" rx="1" fill="#888" />
                </Ic>
              </IconSlot>
            </LayerOptions>
            <LayerList>
              {layers.map((l, i) => (
                <LayerRow key={i} $on={l.on} $flag={l.master}>
                  {l.master && (
                    <ExpandDot>
                      <Ic w={6} h={8}>
                        <path d="M0 0l6 4-6 4z" fill="#ccc" />
                      </Ic>
                    </ExpandDot>
                  )}
                  <LayerThumb>
                    {l.t && <LayerT />}
                    {l.a && <LayerLetter>A</LayerLetter>}
                  </LayerThumb>
                  <LayerName $on={l.on}>{l.name}</LayerName>
                  <LayerCheck $on={l.on}>{l.check && <Check />}</LayerCheck>
                </LayerRow>
              ))}
            </LayerList>
            <LayerFooter>
              <StackBtn>
                <Ic w={14} h={14}>
                  <path d="M1 3l6-2 6 2-6 3zM1 6.5l6 3 6-3M1 9.5l6 3 6-3" stroke="#ddd" strokeWidth="1.2" />
                </Ic>
              </StackBtn>
              <IconSlot $ml={79} $w={14}>
                <Ic w={14} h={12}>
                  <rect width="14" height="12" fill="#ccc" />
                  <circle cx="7" cy="6" r="3.5" fill="#333" />
                </Ic>
              </IconSlot>
              <IconSlot $ml={9} $w={11}>
                <Ic w={11} h={12}>
                  <circle cx="5.5" cy="6" r="5" fill="#777" />
                  <path d="M5.5 1a5 5 0 0 1 0 10z" fill="#ddd" />
                </Ic>
              </IconSlot>
              <FxLabel>fx</FxLabel>
              <IconSlot $ml={79} $w={9}>
                <Ic w={9} h={13}>
                  <path d="M.5.5h5l3 3v9h-8z" stroke="#ccc" />
                </Ic>
              </IconSlot>
              <IconSlot $ml={14} $w={9}>
                <Trash c="#bbb" />
              </IconSlot>
            </LayerFooter>
          </RightColumn>
        </Main>
        <StatusBar>
          <IconSlot $ml={13} $w={10}>
            <Ic w={10} h={10}>
              <path d="M.5 0v10" stroke="#eee" />
              <path d="M10 0v10L2 5z" fill="#eee" />
            </Ic>
          </IconSlot>
          <IconSlot $ml={7} $w={10}>
            <Ic w={10} h={10}>
              <path d="M10 0v10L1 5z" fill="#eee" />
            </Ic>
          </IconSlot>
          <Pager>4,5 von 9</Pager>
          <IconSlot $ml={26} $w={10}>
            <Ic w={10} h={10}>
              <path d="M0 0v10l9-5z" fill="#eee" />
            </Ic>
          </IconSlot>
          <IconSlot $ml={7} $w={10}>
            <Ic w={10} h={10}>
              <path d="M0 0v10l8-5z" fill="#eee" />
              <path d="M9.5 0v10" stroke="#eee" />
            </Ic>
          </IconSlot>
          <IconSlot $ml={10} $w={11}>
            <PageIconLined />
          </IconSlot>
          <Hint>
            <b>Klick</b> auf Objekt = Objekt auswählen. <b>Klick</b>+⇧ = Zur Auswahl hinzufügen. <b>Ziehen</b> = Knoten per Auswahlrahmen auswählen. <b>Ziehen</b>+⌥ = Lasso-Auswahl der Knoten starten. <b>Klick</b>+⌥ = Polygonauswahl der Knoten starten. <b>Ziehen</b>+⇧ = Knoten zur Auswahl hinzufügen. <b>Ziehen</b>+^ = Knoten aus Auswahl entfernen.
          </Hint>
        </StatusBar>
      </Window>
    </Screen>
  );
}
